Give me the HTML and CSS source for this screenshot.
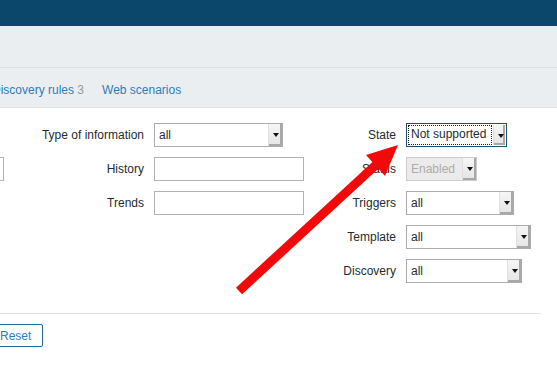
FILE: index.html
```html
<!DOCTYPE html>
<html lang="en">
<head>
    <meta charset="UTF-8">
    <meta name="viewport" content="width=device-width, initial-scale=1.0">
    <title>Items</title>
    <link rel="stylesheet" href="styles.css">
</head>
<body>
    <div class="top-nav"></div>

    <div class="page">
        <header class="header"></header>

        <nav class="tabs">
            <a class="tab" href="#">Discovery rules <span class="count">3</span></a>
            <a class="tab" href="#">Web scenarios</a>
        </nav>

        <form class="filter">
            <div class="filter-grid">
                <!-- row 1 -->
                <span></span>
                <label>Type of information</label>
                <div class="select select-type"><span class="select-text">all</span><span class="select-btn"></span></div>
                <label>State</label>
                <div class="select select-state is-focused"><span class="select-text">Not supported</span><span class="select-btn"></span></div>

                <!-- row 2 -->
                <input class="input input-key" type="text">
                <label>History</label>
                <input class="input" type="text">
                <label>Status</label>
                <div class="select select-status is-disabled"><span class="select-text">Enabled</span><span class="select-btn"></span></div>

                <!-- row 3 -->
                <span></span>
                <label>Trends</label>
                <input class="input" type="text">
                <label>Triggers</label>
                <div class="select select-triggers"><span class="select-text">all</span><span class="select-btn"></span></div>

                <!-- row 4 -->
                <span></span>
                <span></span>
                <span></span>
                <label>Template</label>
                <div class="select select-template"><span class="select-text">all</span><span class="select-btn"></span></div>

                <!-- row 5 -->
                <span></span>
                <span></span>
                <span></span>
                <label>Discovery</label>
                <div class="select select-discovery"><span class="select-text">all</span><span class="select-btn"></span></div>
            </div>
        </form>

        <div class="filter-buttons">
            <button class="btn btn-apply" type="button">Apply</button>
            <button class="btn btn-reset" type="button">Reset</button>
        </div>
    </div>

    <!-- annotation arrow drawn over the screenshot -->
    <svg class="arrow" width="557" height="375" viewBox="0 0 557 375">
        <line x1="239" y1="291" x2="378" y2="163" stroke="#f20a0a" stroke-width="9"/>
        <polygon points="398,145 385,176 366,155" fill="#f20a0a"/>
    </svg>
</body>
</html>
```

FILE: styles.css
```css
* {
    margin: 0;
    padding: 0;
    box-sizing: border-box;
}

body {
    font-family: "Liberation Sans", Arial, sans-serif;
    font-size: 12px;
    color: #1f2c33;
    background: #fff;
    overflow: hidden;
    width: 557px;
    height: 375px;
    position: relative;
}

.top-nav {
    height: 26px;
    background: #0b466b;
}

/* page is scrolled sideways, left part is out of view */
.page {
    margin-left: -60px;
    width: 617px;
}

.header {
    height: 42px;
    background: #ebeef0;
    border-bottom: 1px solid #dde2e5;
}

.tabs {
    height: 40px;
    padding: 15px 0 0 52px;
    background: #ebeef0;
    border-bottom: 1px solid #dde2e5;
    display: flex;
    gap: 18px;
    line-height: 14px;
}

.tab {
    color: #2c7dbb;
    text-decoration: none;
}

.tab .count {
    color: #9a9a9a;
}

.filter {
    margin-right: 16px;
    padding: 15px 0 30px;
    border-bottom: 1px solid #e3e3e3;
}

.filter-grid {
    display: grid;
    grid-template-columns: 62px 152px 150px 102px auto;
    grid-auto-rows: 24px;
    row-gap: 10px;
}

.filter-grid label {
    text-align: right;
    padding-right: 10px;
    line-height: 24px;
}

.input {
    width: 150px;
    height: 24px;
    border: 1px solid #b2b2b2;
    background: #fff;
    font: inherit;
}

.input-key {
    justify-self: end;
    margin-right: -2px;
}

.select {
    height: 24px;
    display: flex;
    align-items: stretch;
    border: 1px solid #acacac;
    background: #fff;
    line-height: 22px;
}

.select-text {
    flex: 1;
    padding-left: 4px;
    white-space: nowrap;
}

.select-btn {
    width: 14px;
    position: relative;
    background: linear-gradient(#f6f6f6, #e4e4e4);
    border-left: 1px solid #e0e0e0;
    box-shadow: inset -2px -2px 0 #a8a8a8;
}

.select-btn::after {
    content: "";
    position: absolute;
    left: 4px;
    top: 9px;
    border-left: 3px solid transparent;
    border-right: 3px solid transparent;
    border-top: 4px solid #111;
}

.select-type { width: 129px; }
.select-state { width: 101px; }
.select-status { width: 71px; }
.select-triggers { width: 108px; }
.select-template { width: 125px; }
.select-discovery { width: 116px; }

.select.is-focused {
    border-color: #1b4f6e;
    padding: 1px;
}

.select.is-focused .select-text {
    flex: 0 0 84px;
    padding-left: 3px;
    line-height: 18px;
    outline: 1px dotted #222;
    outline-offset: -1px;
    margin-right: 1px;
}

.select.is-disabled {
    background: #ebebeb;
    border-color: #cdcdcd;
    color: #acacac;
}

.filter-buttons {
    display: flex;
    gap: 10px;
    margin: 10px 0 0 -16px;
}

.btn {
    font: inherit;
    height: 23px;
    padding: 0 11px;
    border-radius: 2px;
    cursor: pointer;
}

.btn-apply {
    width: 54px;
    background: #0275b8;
    border: 1px solid #0275b8;
    color: #fff;
}

.btn-reset {
    width: 55px;
    background: #fff;
    border: 1px solid #1d6d9a;
    color: #2c7dbb;
}

.arrow {
    position: absolute;
    top: 0;
    left: 0;
    pointer-events: none;
}
```
